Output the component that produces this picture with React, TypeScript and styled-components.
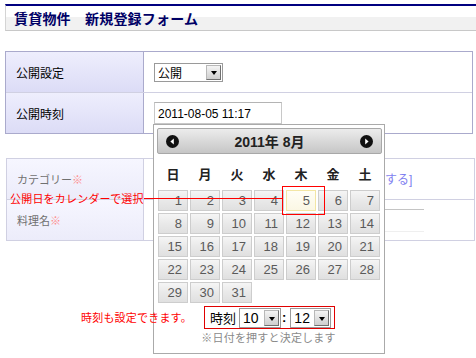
import React from 'react';
import styled, { createGlobalStyle } from 'styled-components';

const GlobalStyle = createGlobalStyle`
body{
  margin:0;
  background:#fff;
  font-family:"Liberation Sans","Noto Sans CJK JP",sans-serif;
}
`
const Page = styled.div`
position:relative;
width:476px;
height:358px;
box-sizing:border-box;
padding:4px 0 0 5px;
overflow:hidden;
`
const Header = styled.div`
height:27px;
box-sizing:border-box;
border-top:2px solid #000080;
border-left:1px solid #d4d4d4;
border-bottom:1px solid #c8c8c8;
background:linear-gradient(#fff 45%, #f1f1f1 45%);
display:flex;
align-items:center;
padding-left:8px;
`
const Title = styled.h1`
margin:0;
font-size:14px;
font-weight:bold;
color:#000066;
letter-spacing:0.2px;
`
const FormTable = styled.div<{ $soft?: boolean; $top: number; $width: number; $left: number }>`
margin-top:${p => p.$top}px;
margin-left:${p => p.$left}px;
width:${p => p.$width}px;
box-sizing:border-box;
border:1px solid ${p => (p.$soft ? '#d0d0e2' : '#aaaacc')};
`
const Row = styled.div<{ $soft?: boolean }>`
display:flex;
height:40px;
& + &{
  border-top:1px solid ${p => (p.$soft ? '#d0d0e2' : '#aaaacc')};
}
`
const Label = styled.div<{ $soft?: boolean }>`
width:${p => (p.$soft ? 137 : 138)}px;
flex-shrink:0;
box-sizing:border-box;
padding-left:10px;
display:flex;
align-items:center;
border-right:1px solid ${p => (p.$soft ? '#d0d0e2' : '#aaaacc')};
background:${p => (p.$soft ? 'linear-gradient(#f6f6ff,#ececfa)' : 'linear-gradient(#eeeefd,#dcdcf6)')};
font-size:${p => (p.$soft ? 11 : 12)}px;
color:${p => (p.$soft ? '#707070' : '#000')};
`
const Mark = styled.span`
color:#ff8c8c;
`
const Value = styled.div`
flex:1;
display:flex;
align-items:center;
padding-left:10px;
`
const SelectBox = styled.div<{ $w: number; $h: number; $size: number }>`
width:${p => p.$w}px;
height:${p => p.$h}px;
box-sizing:border-box;
border:1px solid #9a9a9a;
background:#fff;
display:flex;
align-items:center;
justify-content:space-between;
padding:1px 1px 1px 3px;
font-size:${p => p.$size}px;
color:#000;
`
const SelectBtn = styled.span`
width:15px;
height:100%;
margin-left:auto;
box-sizing:border-box;
border:1px solid #b8b8b8;
border-right-color:#707070;
border-bottom-color:#707070;
background:linear-gradient(#f4f4f4,#cfcfcf);
display:flex;
align-items:center;
justify-content:center;
&::after{
  content:'';
  border-left:3.5px solid transparent;
  border-right:3.5px solid transparent;
  border-top:4px solid #000;
  margin-top:2px;
}
`
const TextInput = styled.div`
width:128px;
height:22px;
box-sizing:border-box;
border:1px solid #c8c8c8;
border-top-color:#b4b4b4;
padding:4px 0 0 3px;
font-size:12px;
color:#000;
margin-top:-1px;
`
const PlainInput = styled.div`
width:270px;
height:23px;
box-sizing:border-box;
border-top:1px solid #c4c4c4;
border-bottom:1px solid #efefef;
`
const AddLink = styled.span`
font-size:12px;
color:#7f7ff0;
margin:-2px 0 0 113px;
`
const Calendar = styled.div`
position:absolute;
left:153px;
top:124px;
width:232px;
height:230px;
box-sizing:border-box;
border:1px solid #aaa;
background:#fff;
padding:3px 2px 0 3px;
`
const MonthBar = styled.div`
width:225px;
height:26px;
box-sizing:border-box;
border:1px solid #a8a8a8;
border-radius:2px;
background:linear-gradient(#ececec,#c6c6c6);
display:flex;
align-items:center;
justify-content:space-between;
padding:0 8px;
`
const MonthTitle = styled.span`
font-size:14px;
font-weight:bold;
color:#222;
`
const Days = styled.div`
display:grid;
grid-template-columns:repeat(7,30px);
column-gap:2px;
row-gap:2px;
margin-left:1px;
`
const WeekDay = styled.div`
height:35px;
display:flex;
align-items:center;
justify-content:center;
font-size:13px;
font-weight:bold;
color:#222;
padding-top:3px;
box-sizing:border-box;
margin-bottom:-1px;
`
const DayCell = styled.div<{ $active?: boolean }>`
height:21px;
box-sizing:border-box;
border:1px solid ${p => (p.$active ? '#f3e6a4' : '#cdcdcd')};
background:${p => (p.$active ? 'linear-gradient(#fffef6,#fbf7e4)' : 'linear-gradient(#f5f5f5,#e9e9e9 50%,#e0e0e0)')};
font-size:13px;
color:#5a5a5a;
text-align:right;
padding-right:5px;
line-height:19px;
`
const TimeBox = styled.div`
margin:3px auto 0;
width:131px;
height:23px;
box-sizing:border-box;
border:1px solid #e00000;
display:flex;
align-items:center;
padding-left:5px;
font-size:13px;
color:#000;
`
const TimeLabel = styled.span`
margin-right:3px;
`
const Colon = styled.span`
margin:0 4px 0 1px;
font-weight:bold;
`
const Note = styled.div`
text-align:center;
font-size:11px;
color:#8a8a8a;
margin-left:-2px;
letter-spacing:0.2px;
`
const Annotation = styled.div<{ $x: number; $y: number }>`
position:absolute;
left:${p => p.$x}px;
top:${p => p.$y}px;
font-size:11px;
color:#f00;
white-space:nowrap;
letter-spacing:0.2px;
`
const Leader = styled.div`
position:absolute;
left:144px;
top:198px;
width:138px;
height:1px;
background:#f00;
`
const Highlight = styled.div`
position:absolute;
left:282px;
top:186px;
width:43px;
height:29px;
box-sizing:border-box;
border:1px solid #f00;
`

function NavDot({ dir }: { dir: 'prev' | 'next' }) {
  return (
    <svg width="13" height="13" viewBox="0 0 13 13">
      <circle cx="6.5" cy="6.5" r="6.5" fill="#111" />
      {dir === 'prev'
        ? <polygon points="7.8,3.6 7.8,9.4 4.4,6.5" fill="#fff" />
        : <polygon points="5.2,3.6 5.2,9.4 8.6,6.5" fill="#fff" />}
    </svg>
  );
}

const weekDays = ['日', '月', '火', '水', '木', '金', '土'];
const dates = Array.from({ length: 31 }, (_, i) => i + 1);

function App() {
  return (
    <Page>
      <GlobalStyle />
      <Header>
        <Title>賃貸物件　新規登録フォーム</Title>
      </Header>

      <FormTable $top={20} $left={0} $width={468}>
        <Row>
          <Label>公開設定</Label>
          <Value>
            <SelectBox $w={69} $h={19} $size={12}>
              公開
              <SelectBtn />
            </SelectBox>
          </Value>
        </Row>
        <Row>
          <Label>公開時刻</Label>
          <Value>
            <TextInput>2011-08-05 11:17</TextInput>
          </Value>
        </Row>
      </FormTable>

      <FormTable $soft $top={24} $left={1} $width={469}>
        <Row $soft>
          <Label $soft>カテゴリー<Mark>※</Mark></Label>
          <Value>
            <SelectBox $w={118} $h={19} $size={12}>
              <SelectBtn />
            </SelectBox>
            <AddLink>する]</AddLink>
          </Value>
        </Row>
        <Row $soft>
          <Label $soft>料理名<Mark>※</Mark></Label>
          <Value>
            <PlainInput />
          </Value>
        </Row>
      </FormTable>

      <Calendar>
        <MonthBar>
          <NavDot dir="prev" />
          <MonthTitle>2011年 8月</MonthTitle>
          <NavDot dir="next" />
        </MonthBar>
        <Days>
          {weekDays.map(d => <WeekDay key={d}>{d}</WeekDay>)}
          {dates.map(d => <DayCell key={d} $active={d === 5}>{d}</DayCell>)}
        </Days>
        <TimeBox>
          <TimeLabel>時刻</TimeLabel>
          <SelectBox $w={42} $h={20} $size={14}>
            10
            <SelectBtn />
          </SelectBox>
          <Colon>:</Colon>
          <SelectBox $w={41} $h={20} $size={14}>
            12
            <SelectBtn />
          </SelectBox>
        </TimeBox>
        <Note>※日付を押すと決定します</Note>
      </Calendar>

      <Annotation $x={10} $y={190}>公開日をカレンダーで選択</Annotation>
      <Leader />
      <Highlight />
      <Annotation $x={81} $y={309}>時刻も設定できます。</Annotation>
    </Page>
  );
}

export default App;
